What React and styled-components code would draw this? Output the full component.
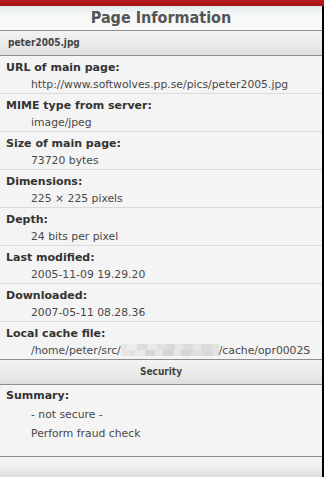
import React from "react";
import styled, { createGlobalStyle } from "styled-components";

const Global = createGlobalStyle`
  html, body { margin: 0; padding: 0; }
  body {
    background: #f4f4f4;
    font-family: "DejaVu Sans", "Liberation Sans", sans-serif;
    -webkit-font-smoothing: antialiased;
  }
`;

const Page = styled.div`
  display: flex;
  flex-direction: column;
  min-height: 100vh;
  width: 324px;
`;

const TopBar = styled.div`
  height: 6px;
  background: linear-gradient(#b81c1c, #a51313);
`;

const Main = styled.div`
  flex: 1;
  display: flex;
  flex-direction: column;
  border-right: 2px solid #000;
  background: #f4f4f4;
`;

const Title = styled.h1`
  margin: 0;
  height: 24px;
  line-height: 24px;
  text-align: center;
  font-family: "DejaVu Sans Condensed", "DejaVu Sans", sans-serif;
  font-stretch: condensed;
  font-weight: bold;
  font-size: 16px;
  color: #555;
  background: linear-gradient(#e2eaec, #f6f8f8 35%, #f8f8f8);
`;

const SectionHeader = styled.div`
  height: 24px;
  line-height: 24px;
  padding: 0 8px;
  text-align: ${(p) => p.$align || "left"};
  font-family: "DejaVu Sans Condensed", "DejaVu Sans", sans-serif;
  font-stretch: condensed;
  font-weight: bold;
  font-size: 10px;
  color: #444;
  border-top: 1px solid #8e8e8e;
  border-bottom: 1px solid #8e8e8e;
  background: linear-gradient(#f3f3f3, #e9e9e9 60%, #dedede);
`;

const Row = styled.div`
  padding-top: 3px;
  & + & {
    border-top: 1px solid #dadada;
  }
`;

const Label = styled.div`
  padding-left: 6px;
  font-size: 11px;
  line-height: 18px;
  font-weight: bold;
  color: #333;
  white-space: nowrap;
`;

const Value = styled.div`
  padding-left: 31px;
  font-size: 10.8px;
  line-height: ${(p) => p.$lh || 16}px;
  color: #484848;
  white-space: nowrap;
`;

const Blurred = styled.span`
  display: inline-block;
  width: 98px;
  height: 12px;
  vertical-align: -2px;
  background:
    linear-gradient(90deg,
      #e4e4e4 0 6px, #ececec 6px 16px, #dcdcdc 16px 26px, #e8e8e8 26px 36px,
      #e0e0e0 36px 46px, #d8d8d8 46px 54px, #e6e6e6 54px 62px, #dcdcdc 62px 72px,
      #e6e6e6 72px 80px, #dadada 80px 90px, #e2e2e2 90px 98px) top / 100% 6px no-repeat,
    linear-gradient(90deg,
      #e8e8e8 0 8px, #e0e0e0 8px 14px, #eaeaea 14px 24px, #d6d6d6 24px 34px,
      #e6e6e6 34px 42px, #d4d4d4 42px 52px, #e4e4e4 52px 60px, #d6d6d6 60px 70px,
      #e0e0e0 70px 82px, #d8d8d8 82px 92px, #e4e4e4 92px 98px) bottom / 100% 6px no-repeat;
`;

const Summary = styled.div`
  padding: 2px 0 13px;
`;

const Footer = styled.div`
  flex: 1;
  border-top: 1px solid #8e8e8e;
  background: linear-gradient(#f4f4f4, #f0f0f0 50%, #dcdcdc);
`;

const rows = [
  ["URL of main page:", "http://www.softwolves.pp.se/pics/peter2005.jpg"],
  ["MIME type from server:", "image/jpeg"],
  ["Size of main page:", "73720 bytes"],
  ["Dimensions:", "225 × 225 pixels"],
  ["Depth:", "24 bits per pixel"],
  ["Last modified:", "2005-11-09 19.29.20"],
  ["Downloaded:", "2007-05-11 08.28.36"],
  [
    "Local cache file:",
    <>
      /home/peter/src/<Blurred />/cache/opr0002S
    </>,
  ],
];

export default function App() {
  return (
    <>
      <Global />
      <Page>
        <TopBar />
        <Main>
          <Title>Page Information</Title>
          <SectionHeader>peter2005.jpg</SectionHeader>
          {rows.map(([label, value], i) => (
            <Row key={i}>
              <Label>{label}</Label>
              <Value>{value}</Value>
            </Row>
          ))}
          <SectionHeader $align="center">Security</SectionHeader>
          <Summary>
            <Label>Summary:</Label>
            <Value $lh={19}>- not secure -</Value>
            <Value $lh={19}>Perform fraud check</Value>
          </Summary>
          <Footer />
        </Main>
      </Page>
    </>
  );
}
